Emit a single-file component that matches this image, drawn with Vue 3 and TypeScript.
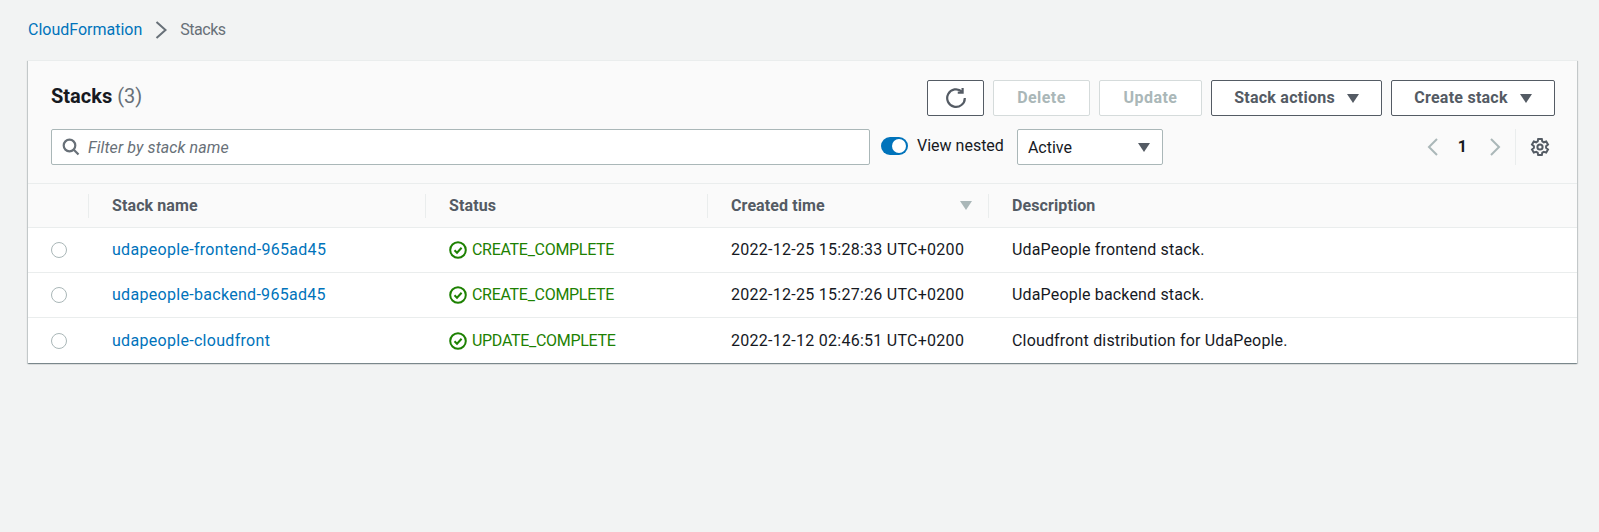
<script setup lang="ts">
type Stack = {
  name: string
  status: string
  created: string
  description: string
}

const stacks: Stack[] = [
  {
    name: 'udapeople-frontend-965ad45',
    status: 'CREATE_COMPLETE',
    created: '2022-12-25 15:28:33 UTC+0200',
    description: 'UdaPeople frontend stack.'
  },
  {
    name: 'udapeople-backend-965ad45',
    status: 'CREATE_COMPLETE',
    created: '2022-12-25 15:27:26 UTC+0200',
    description: 'UdaPeople backend stack.'
  },
  {
    name: 'udapeople-cloudfront',
    status: 'UPDATE_COMPLETE',
    created: '2022-12-12 02:46:51 UTC+0200',
    description: 'Cloudfront distribution for UdaPeople.'
  }
]
</script>

<template>
  <main class="page">
    <nav class="crumbs">
      <a class="link">CloudFormation</a>
      <svg class="crumb-sep" viewBox="0 -1 16 18" width="16" height="18">
        <path d="M2.5 0l9 8-9 8" />
      </svg>
      <span class="crumb-here">Stacks</span>
    </nav>

    <section class="card">
      <header class="card-head">
        <div class="row-top">
          <h1>Stacks <span class="count">(3)</span></h1>
          <div class="actions">
            <button class="btn icon" type="button">
              <svg viewBox="0 0 20 20" width="22" height="22">
                <path d="M15.4 4.2A8 8 0 1 0 18 10" />
                <path d="M16 .8v4.4h-4.4" />
              </svg>
            </button>
            <button class="btn delete" type="button" disabled>Delete</button>
            <button class="btn update" type="button" disabled>Update</button>
            <button class="btn caret stack-actions" type="button">Stack actions <i class="tri" /></button>
            <button class="btn caret create" type="button">Create stack <i class="tri" /></button>
          </div>
        </div>
        <div class="row-filter">
          <label class="search">
            <svg viewBox="0 0 18 18" width="18" height="18">
              <circle cx="7.5" cy="7.5" r="5.8" />
              <path d="M11.8 11.8l4.7 4.7" />
            </svg>
            <input type="text" placeholder="Filter by stack name" />
          </label>
          <div class="toggle"><span class="knob" /></div>
          <span class="toggle-label">View nested</span>
          <div class="select">Active <i class="tri" /></div>
          <div class="pager">
            <svg class="chev" viewBox="0 0 16 20" width="16" height="20"><path d="M12 2L4 10l8 8" /></svg>
            <span class="page-num">1</span>
            <svg class="chev next" viewBox="0 0 16 20" width="16" height="20"><path d="M4 2l8 8-8 8" /></svg>
          </div>
          <div class="settings">
            <svg viewBox="0 0 20 20" width="20" height="20">
              <path d="M8.2 2h3.6l.5 2.4 1.5.9 2.4-.8 1.8 3.1-1.9 1.6v1.7l1.9 1.6-1.8 3.1-2.4-.8-1.5.9-.5 2.4H8.2l-.5-2.4-1.5-.9-2.4.8L2 12.5l1.9-1.6V9.2L2 7.6l1.8-3.1 2.4.8 1.5-.9z" />
              <circle cx="10" cy="10" r="2.6" />
            </svg>
          </div>
        </div>
      </header>

      <table class="table">
        <colgroup>
          <col class="col-radio" />
          <col class="col-name" />
          <col class="col-status" />
          <col class="col-time" />
          <col />
        </colgroup>
        <thead>
          <tr>
            <th />
            <th><span class="th-in">Stack name</span></th>
            <th><span class="th-in">Status</span></th>
            <th>
              <span class="th-in">Created time <i class="tri sort" /></span>
            </th>
            <th><span class="th-in">Description</span></th>
          </tr>
        </thead>
        <tbody>
          <tr v-for="stack in stacks" :key="stack.name">
            <td class="radio-cell"><span class="radio" /></td>
            <td><a class="link name">{{ stack.name }}</a></td>
            <td>
              <span class="status">
                <svg viewBox="0 0 18 18" width="18" height="18">
                  <circle cx="9" cy="9" r="7.8" />
                  <path d="M5.5 9.2l2.5 2.5 4.6-5" />
                </svg>
                {{ stack.status }}
              </span>
            </td>
            <td class="created">{{ stack.created }}</td>
            <td class="desc">{{ stack.description }}</td>
          </tr>
        </tbody>
      </table>
    </section>
  </main>
</template>

<style>
html,
body {
  margin: 0;
  background: #f2f3f3;
}
</style>

<style scoped>
.page {
  min-height: 532px;
  box-sizing: border-box;
  padding: 20px 22px 0 28px;
  font-family: Roboto, 'Liberation Sans', sans-serif;
  font-size: 16px;
  line-height: 20px;
  color: #16191f;
  background: #f2f3f3;
}

.crumbs {
  display: flex;
  align-items: center;
  height: 20px;
  margin-bottom: 20px;
}

.link {
  color: #0073bb;
}

.name {
  letter-spacing: 0.3px;
}

.crumb-sep {
  margin: 0 10px 0 12px;
  fill: none;
  stroke: #687078;
  stroke-width: 2;
}

.crumb-here {
  color: #687078;
  letter-spacing: -0.5px;
}

.card {
  background: #fff;
  border-top: 1px solid #eaeded;
  box-shadow: 0 1px 1px rgba(0, 28, 36, 0.3), 1px 1px 1px rgba(0, 28, 36, 0.15), -1px 1px 1px rgba(0, 28, 36, 0.15);
}

.card-head {
  background: #fafafa;
  padding: 19px 22px 18px 23px;
  border-bottom: 1px solid #eaeded;
}

.row-top {
  display: flex;
  align-items: center;
  justify-content: space-between;
  height: 36px;
  margin-bottom: 13px;
}

h1 {
  margin: 0 0 4px;
  font-size: 20px;
  font-weight: 700;
}

.count {
  font-weight: 400;
  color: #687078;
}

.actions {
  display: flex;
  gap: 9px;
}

.btn {
  height: 36px;
  box-sizing: border-box;
  border: 1px solid #545b64;
  border-radius: 2px;
  background: #fff;
  color: #545b64;
  font: inherit;
  font-weight: 700;
  letter-spacing: 0.25px;
  display: flex;
  align-items: center;
  justify-content: center;
  padding: 0;
}

.btn:disabled {
  border-color: #d5dbdb;
  color: #aab7b8;
  letter-spacing: 0.45px;
}

.btn.icon {
  width: 57px;
}

.btn.icon svg {
  fill: none;
  stroke: #545b64;
  stroke-width: 2;
}

.delete {
  width: 97px;
}

.update {
  width: 103px;
}

.stack-actions {
  width: 171px;
  gap: 12px;
}

.create {
  width: 164px;
  gap: 12px;
}

.tri {
  display: inline-block;
  width: 0;
  height: 0;
  border-left: 7px solid transparent;
  border-right: 7px solid transparent;
  border-top: 10px solid #545b64;
}

.btn .tri,
.select .tri {
  border-left-width: 6px;
  border-right-width: 6px;
  border-top-width: 9px;
}

.row-filter {
  display: flex;
  align-items: center;
  height: 36px;
}

.search {
  width: 819px;
  height: 36px;
  box-sizing: border-box;
  display: flex;
  align-items: center;
  gap: 8px;
  padding: 0 10px;
  background: #fff;
  border: 1px solid #aab7b8;
  border-radius: 2px;
}

.search svg {
  flex: none;
  fill: none;
  stroke: #687078;
  stroke-width: 2.2;
}

.search input {
  flex: 1;
  border: 0;
  outline: none;
  padding: 1px 0 0;
  font: inherit;
  font-style: italic;
  letter-spacing: 0.1px;
  background: transparent;
}

.search input::placeholder {
  color: #687078;
  opacity: 1;
}

.toggle {
  width: 27px;
  height: 18px;
  margin-left: 11px;
  border-radius: 9px;
  background: #0073bb;
  position: relative;
  top: -1px;
}

.knob {
  position: absolute;
  right: 2px;
  top: 2px;
  width: 14px;
  height: 14px;
  border-radius: 50%;
  background: #fff;
}

.toggle-label {
  margin-left: 9px;
  position: relative;
  top: -1px;
}

.select {
  width: 146px;
  height: 36px;
  box-sizing: border-box;
  margin-left: 13px;
  padding: 1px 12px 0 10px;
  display: flex;
  align-items: center;
  justify-content: space-between;
  background: #fff;
  border: 1px solid #aab7b8;
  border-radius: 2px;
}

.pager {
  margin-left: auto;
  display: flex;
  align-items: center;
  gap: 17px;
}

.chev {
  fill: none;
  stroke: #aab7b8;
  stroke-width: 2;
}

.chev.next {
  margin-left: 3px;
}

.page-num {
  font-weight: 700;
}

.settings {
  margin-left: 12px;
  padding: 0 5px 0 14px;
  height: 36px;
  display: flex;
  align-items: center;
  border-left: 1px solid #eaeded;
}

.settings svg {
  fill: none;
  stroke: #545b64;
  stroke-width: 2;
}

.table {
  width: 100%;
  border-collapse: collapse;
  table-layout: fixed;
}

.col-radio {
  width: 60px;
}

.col-name {
  width: 337px;
}

.col-status {
  width: 282px;
}

.col-time {
  width: 281px;
}

th {
  background: #fafafa;
  height: 43px;
  padding: 0;
  text-align: left;
  color: #545b64;
  font-weight: 700;
  letter-spacing: 0.1px;
  border-bottom: 1px solid #eaeded;
}

.th-in {
  display: flex;
  align-items: center;
  justify-content: space-between;
  height: 24px;
  padding: 0 16px 0 23px;
  border-left: 1px solid #eaeded;
}

.sort {
  border-left-width: 6px;
  border-right-width: 6px;
  border-top: 9px solid #aab7b8;
}

td {
  height: 44px;
  padding: 0 0 0 24px;
  border-bottom: 1px solid #eaeded;
}

tbody tr:last-child td {
  height: 45px;
  border-bottom: 0;
}

.radio-cell {
  padding-left: 23px;
}

.radio {
  display: block;
  width: 14px;
  height: 14px;
  border: 1px solid #aab7b8;
  border-radius: 50%;
  background: #fff;
}

.status {
  display: flex;
  align-items: center;
  gap: 5px;
  color: #1d8102;
  letter-spacing: -0.3px;
}

.status svg {
  fill: none;
  stroke: #1d8102;
  stroke-width: 2;
}

.created {
  letter-spacing: 0.27px;
}

.desc {
  letter-spacing: 0.17px;
}
</style>
